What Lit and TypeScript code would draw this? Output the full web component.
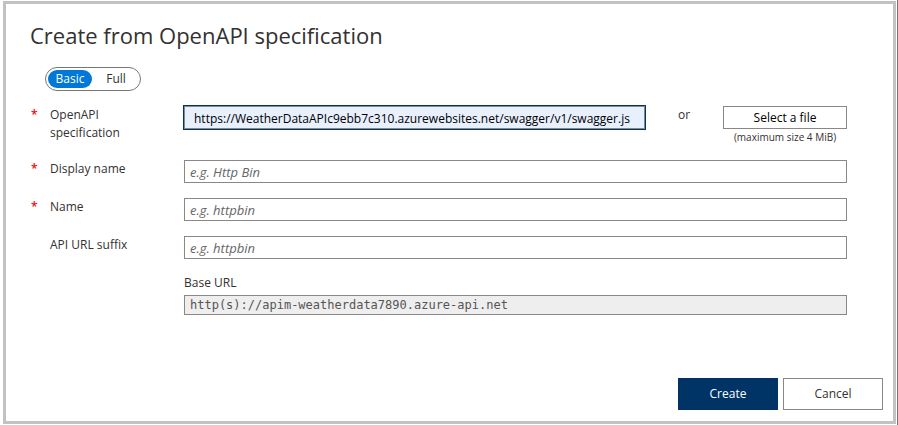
import { LitElement, html, css, nothing } from "lit";
import { customElement, state } from "lit/decorators.js";

interface Field {
  id: string;
  label: string;
  hint: string;
  required: boolean;
}

const FIELDS: Field[] = [
  { id: "display-name", label: "Display name", hint: "e.g. Http Bin", required: true },
  { id: "name", label: "Name", hint: "e.g. httpbin", required: true },
  { id: "suffix", label: "API URL suffix", hint: "e.g. httpbin", required: false },
];

@customElement("app-root")
export class AppRoot extends LitElement {
  static styles = css`
    :host {
      display: block;
      font-family: "Open Sans", "Noto Sans", sans-serif;
      font-size: 12px;
      line-height: 18px;
      color: #323130;
    }
    * {
      box-sizing: border-box;
    }
    .page {
      background: #fff;
      border-right: 1px solid #777;
      padding: 1px 1px 1px 3px;
    }
    .dialog {
      border: 3px solid #c2c2c2;
      padding: 15px 10px 11px 24px;
    }
    h1 {
      margin: 0 0 16px;
      font-size: 22px;
      line-height: 32px;
      font-weight: 400;
    }
    input,
    button {
      font: inherit;
      margin: 0;
      border-radius: 0;
    }
    .toggle {
      display: inline-flex;
      margin: 0 0 15px 15px;
      padding: 2px;
      border: 1px solid #777;
      border-radius: 12px;
      vertical-align: top;
    }
    .toggle label {
      position: relative;
      width: 44px;
      height: 18px;
      border-radius: 9px;
      text-align: center;
      cursor: pointer;
    }
    .toggle label + label {
      width: 48px;
      margin-right: -2px;
    }
    .toggle label.on {
      background: #0078d7;
      color: #fff;
    }
    .toggle input {
      position: absolute;
      inset: 0;
      opacity: 0;
    }
    .form {
      display: grid;
      grid-template-columns: 20px 134px 1fr;
      row-gap: 15px;
      margin-right: 36px;
    }
    .star {
      color: #f00;
      font-weight: 600;
      padding-left: 1px;
    }
    .box {
      display: block;
      width: 100%;
      height: 23px;
      padding: 0 5px;
      border: 1px solid #8a8886;
      background: #fff;
      color: #000;
      outline: 0;
    }
    .box::placeholder {
      color: #666;
      font-style: italic;
      opacity: 1;
    }
    .plain {
      font-size: 13px;
    }
    .source {
      display: grid;
      grid-template-columns: 1fr 78px 124px;
      min-height: 39px;
    }
    .box.url {
      background: #e8f0fe;
      outline: 1px solid #003366;
      padding: 1px 5px 0 9px;
    }
    .or {
      text-align: center;
    }
    .file {
      display: flex;
      flex-direction: column;
    }
    .file .box {
      text-align: center;
      line-height: 18px;
    }
    .note {
      font-size: 10px;
      line-height: 16px;
      text-align: center;
    }
    .base {
      grid-column: 3;
    }
    .base label {
      display: block;
      margin-bottom: 3px;
    }
    .box.fixed {
      height: 20px;
      background: #eee;
      color: #555;
      font-family: "DejaVu Sans Mono", monospace;
      font-size: 12px;
    }
    .actions {
      display: flex;
      justify-content: flex-end;
      gap: 5px;
      margin-top: 63px;
    }
    .actions button {
      width: 100px;
      height: 32px;
      border: 1px solid #8a8886;
      background: #fff;
      color: #323130;
    }
    .actions .primary {
      border-color: #003366;
      background: #003366;
      color: #fff;
    }
  `;

  @state() private mode = "Basic";

  render() {
    return html`
      <div class="page">
        <form class="dialog" @submit=${(e: Event) => e.preventDefault()}>
          <h1>Create from OpenAPI specification</h1>
          <div class="toggle" role="radiogroup" aria-label="Mode">
            ${["Basic", "Full"].map(
              (m) => html`<label class=${m === this.mode ? "on" : ""}
                ><input
                  type="radio"
                  name="mode"
                  .checked=${m === this.mode}
                  @change=${() => (this.mode = m)}
                />${m}</label
              >`,
            )}
          </div>
          <div class="form">
            <span class="star">*</span>
            <label for="spec">OpenAPI<br />specification</label>
            <div class="source">
              <input
                id="spec"
                class="box url"
                type="text"
                value="https://WeatherDataAPIc9ebb7c310.azurewebsites.net/swagger/v1/swagger.js"
              />
              <span class="or">or</span>
              <div class="file">
                <button type="button" class="box">Select a file</button>
                <span class="note">(maximum size 4 MiB)</span>
              </div>
            </div>
            ${FIELDS.map(
              (f) => html`
                <span class="star">${f.required ? "*" : nothing}</span>
                <label for=${f.id}>${f.label}</label>
                <input id=${f.id} class="box plain" type="text" placeholder=${f.hint} />
              `,
            )}
            <div class="base">
              <label for="base">Base URL</label>
              <input
                id="base"
                class="box fixed"
                type="text"
                readonly
                value="http(s)://apim-weatherdata7890.azure-api.net"
              />
            </div>
          </div>
          <div class="actions">
            <button type="submit" class="primary">Create</button>
            <button type="button">Cancel</button>
          </div>
        </form>
      </div>
    `;
  }
}
